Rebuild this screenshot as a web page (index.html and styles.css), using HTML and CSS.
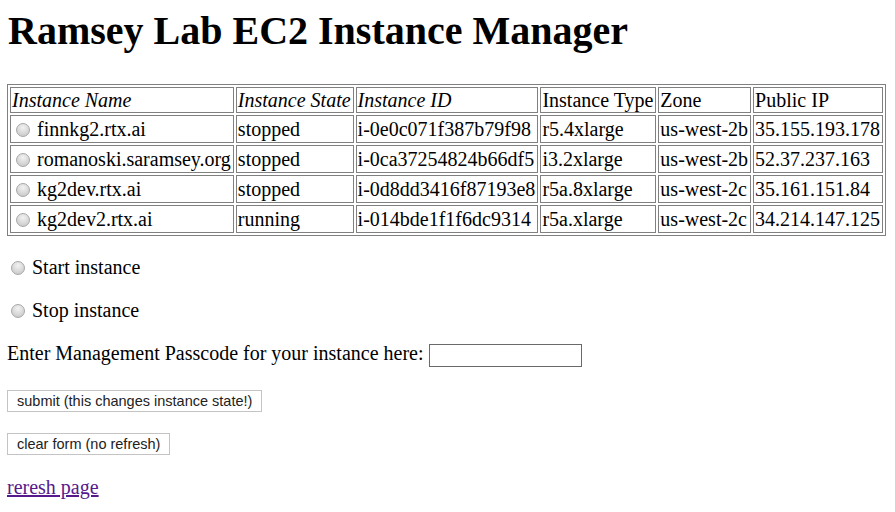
FILE: index.html
```html
<!DOCTYPE html>
<html>
<head>
<meta charset="utf-8">
<link rel="stylesheet" href="styles.css">
</head>
<body>
<h1 class="title">Ramsey Lab EC2 Instance Manager</h1>
<form class="form">
<table class="grid">
<tr class="head"><th>Instance Name</th><th>Instance State</th><th>Instance ID</th><td>Instance Type</td><td>Zone</td><td>Public IP</td></tr>
<tr><td><input type="radio" name="inst" class="radio"> finnkg2.rtx.ai</td><td>stopped</td><td>i-0e0c071f387b79f98</td><td>r5.4xlarge</td><td>us-west-2b</td><td>35.155.193.178</td></tr>
<tr><td><input type="radio" name="inst" class="radio"> romanoski.saramsey.org</td><td>stopped</td><td>i-0ca37254824b66df5</td><td>i3.2xlarge</td><td>us-west-2b</td><td>52.37.237.163</td></tr>
<tr><td><input type="radio" name="inst" class="radio"> kg2dev.rtx.ai</td><td>stopped</td><td>i-0d8dd3416f87193e8</td><td>r5a.8xlarge</td><td>us-west-2c</td><td>35.161.151.84</td></tr>
<tr><td><input type="radio" name="inst" class="radio"> kg2dev2.rtx.ai</td><td>running</td><td>i-014bde1f1f6dc9314</td><td>r5a.xlarge</td><td>us-west-2c</td><td>34.214.147.125</td></tr>
</table>
<p class="line"><input type="radio" name="act" class="radio"> Start instance</p>
<p class="line"><input type="radio" name="act" class="radio"> Stop instance</p>
<p class="line pass-line">Enter Management Passcode for your instance here: <input type="password" class="pass"></p>
<p class="line"><button type="button" class="btn">submit (this changes instance state!)</button></p>
<p class="line"><button type="reset" class="btn">clear form (no refresh)</button></p>
<p class="line"><a href="#" class="link">reresh page</a></p>
</form>
</body>
</html>
```
FILE: styles.css
```css
html, body {
  margin: 0;
  padding: 0;
  background: #fff;
}
body {
  margin: 8px 8px 8px 7px;
  font-family: "Liberation Serif", "Times New Roman", serif;
  font-size: 20px;
  color: #000;
}
.title {
  font-size: 40px;
  font-weight: bold;
  margin: 0;
  line-height: 46px;
  padding-left: 1px;
}
.form {
  margin: 0;
}
.grid {
  margin-top: 30px;
  border: 1px solid #808080;
  border-collapse: separate;
  border-spacing: 2px;
}
.grid th, .grid td {
  border: 1px solid #808080;
  padding: 1px 2px 1px 1px;
  text-align: left;
  font-weight: normal;
  line-height: 24px;
  white-space: nowrap;
}
.grid .head th, .grid .head td {
  line-height: 22px;
}
.grid th {
  font-style: italic;
}
.radio {
  -webkit-appearance: none;
  appearance: none;
  width: 14px;
  height: 14px;
  margin: 0 2px 0 4px;
  border-radius: 50%;
  border: 1px solid #a8a8a8;
  background: radial-gradient(circle at 50% 30%, #f2f2f2 0%, #d8d8d8 55%, #c2c2c2 100%);
  vertical-align: -1px;
  box-sizing: border-box;
}
.line {
  margin: 20px 0 0 0;
  line-height: 23px;
}
.pass-line {
  padding-bottom: 3px;
}
.pass {
  width: 153px;
  height: 23px;
  box-sizing: border-box;
  border: 1px solid #6a6a6a;
  margin: 0;
  padding: 0;
  vertical-align: 0;
}
.btn {
  font-family: "Liberation Sans", Arial, sans-serif;
  font-size: 14.5px;
  color: #222;
  background: #fff;
  border: 1px solid #c4c4c4;
  border-radius: 0;
  padding: 0 9px;
  height: 22px;
  margin: 0;
  vertical-align: top;
}
.link {
  color: #551a8b;
  text-decoration: underline;
}
```
